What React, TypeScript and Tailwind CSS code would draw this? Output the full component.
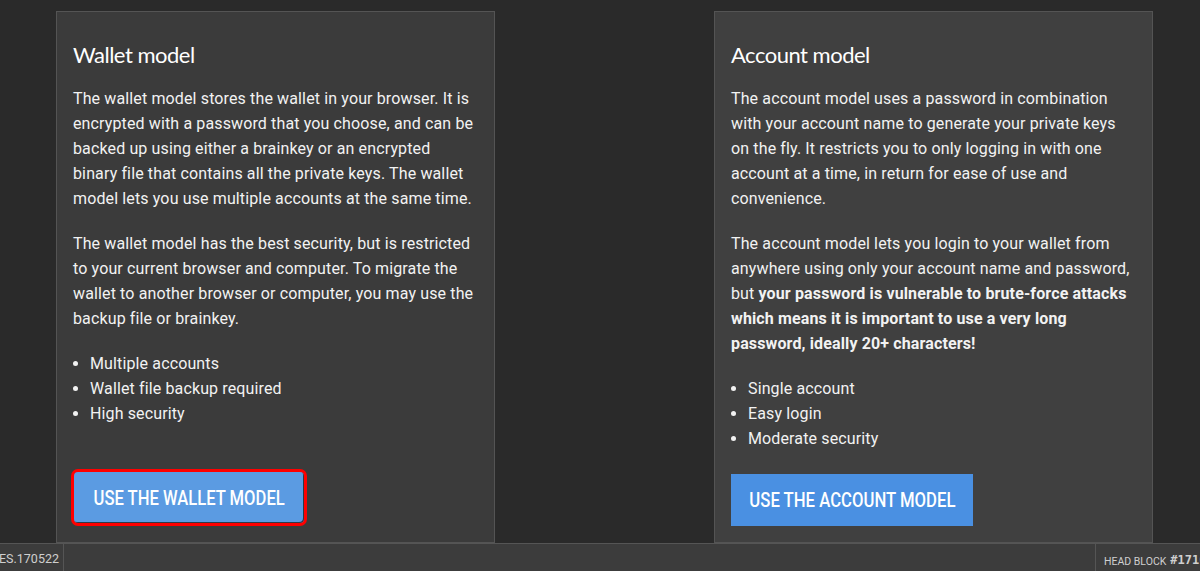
import React from "react";

const body = "font-['Roboto',_'Liberation_Sans',_sans-serif]";

function Card({
  title,
  paras,
  items,
  button,
  focused,
  bg,
}: {
  title: string;
  paras: React.ReactNode[];
  items: string[];
  button: string;
  focused?: boolean;
  bg: string;
}) {
  return (
    <div className={`flex w-[439px] flex-col border border-[#545454] pb-[16px] pl-[16px] pr-[20px] pt-[25px] ${bg}`}>
      <h3 className="font-['Lato',_'Open_Sans',_sans-serif] text-[22px] font-normal leading-[36px] tracking-[-0.5px] text-white">
        {title}
      </h3>
      <div className={`${body} mt-[13px] text-[16px] leading-[25px] tracking-[0.13px] text-[#f2f2f2]`}>
        {paras.map((p, i) => (
          <p key={i} className="mb-[20px]">
            {p}
          </p>
        ))}
        <ul className="list-disc pl-[17px]">
          {items.map((t) => (
            <li key={t}>{t}</li>
          ))}
        </ul>
      </div>
      <div className="mt-auto">
        {focused ? (
          <button className="-ml-[2px] flex h-[57px] w-[236px] items-center justify-center rounded-[7px] border-[3px] border-[#ff0000] bg-[#5b9be2] shadow-[inset_-1px_-1px_0_#2f3a48]">
            <span className="inline-block whitespace-nowrap origin-center scale-x-[0.83] font-['Roboto',_sans-serif] text-[20px] font-medium text-white">
              {button}
            </span>
          </button>
        ) : (
          <button className="flex h-[52px] w-[242px] items-center justify-center bg-[#4a90e2]">
            <span className="inline-block whitespace-nowrap origin-center scale-x-[0.835] font-['Roboto',_sans-serif] text-[20px] font-medium text-white">
              {button}
            </span>
          </button>
        )}
      </div>
    </div>
  );
}

export default function App() {
  return (
    <div className="flex h-[571px] w-[1200px] flex-col overflow-hidden bg-[#2a2a2a]">
      <div className="flex min-h-0 flex-1 gap-[219px] pl-[56px] pt-[11px]">
        <Card
          bg="bg-[#3b3b3b]"
          title="Wallet model"
          focused
          paras={[
            "The wallet model stores the wallet in your browser. It is encrypted with a password that you choose, and can be backed up using either a brainkey or an encrypted binary file that contains all the private keys. The wallet model lets you use multiple accounts at the same time.",
            "The wallet model has the best security, but is restricted to your current browser and computer. To migrate the wallet to another browser or computer, you may use the backup file or brainkey.",
          ]}
          items={["Multiple accounts", "Wallet file backup required", "High security"]}
          button="USE THE WALLET MODEL"
        />
        <Card
          bg="bg-[#404040]"
          title="Account model"
          paras={[
            "The account model uses a password in combination with your account name to generate your private keys on the fly. It restricts you to only logging in with one account at a time, in return for ease of use and convenience.",
            <>
              The account model lets you login to your wallet from anywhere using only your account name and password, but{" "}
              <b className="font-bold">
                your password is vulnerable to brute-force attacks which means it is important to use a very long password, ideally 20+ characters!
              </b>
            </>,
          ]}
          items={["Single account", "Easy login", "Moderate security"]}
          button="USE THE ACCOUNT MODEL"
        />
      </div>
      <div className={`${body} flex h-[28px] border-t border-[#555] bg-[#3c3c3c] text-[#cfcfcf]`}>
        <div className="flex h-full w-[64px] items-end overflow-hidden border-r border-[#555] pb-[2px] text-[12.5px]">
          <span className="-ml-[1px] whitespace-nowrap">ES.170522</span>
        </div>
        <div className="flex-1" />
        <div className="flex h-full w-[105px] items-end gap-[4px] overflow-hidden whitespace-nowrap border-l border-[#555] pb-[3px] pl-[8px]">
          <span className="text-[10.5px] font-normal leading-[13px]">HEAD BLOCK</span>
          <span className="font-['DejaVu_Sans_Mono',_monospace] text-[12px] font-bold leading-[16px]">#17160589</span>
        </div>
      </div>
    </div>
  );
}
